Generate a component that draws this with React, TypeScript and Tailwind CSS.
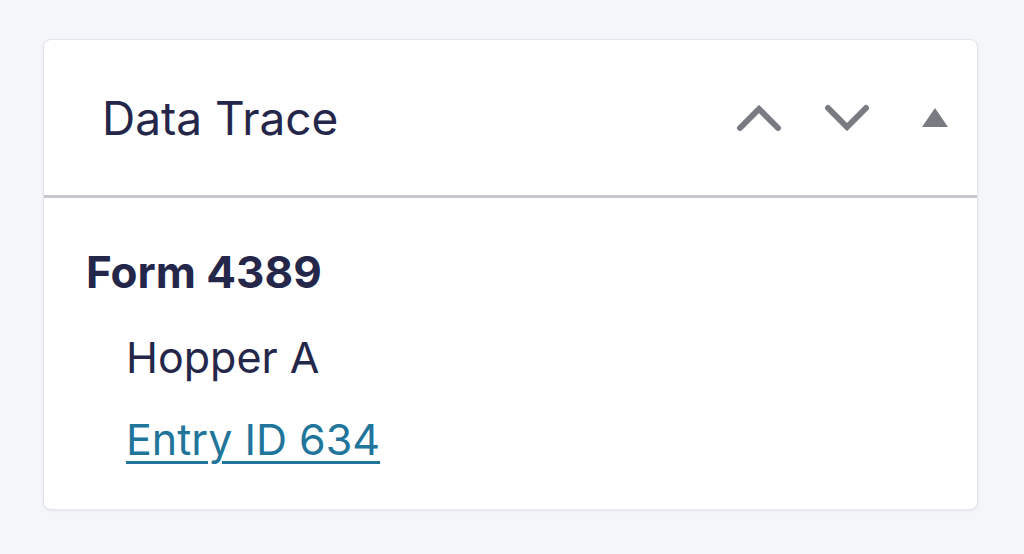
import React from "react";

export default function App() {
  return (
    <div className="w-[1024px] h-[554px] bg-[#f5f6fa] pt-[39px] pl-[43px] [font-family:Inter,'Noto_Sans',sans-serif]">
      <div className="w-[935px] h-[471px] bg-white rounded-[8px] border border-[#e3e4ec] shadow-[0_1px_3px_rgba(30,35,80,0.08)] flex flex-col">
        <div className="h-[158px] flex items-center justify-between pl-[58px] pr-[28px] border-b-[3px] border-[#c6c7cb]">
          <h2 className="text-[46px] leading-none text-[#24274a] font-normal">Data Trace</h2>
          <div className="flex items-center gap-[40px] text-[#787c82]">
            <svg width="48" height="28" viewBox="0 0 48 28" fill="none" stroke="currentColor" strokeWidth="6" strokeLinecap="round" strokeLinejoin="miter">
              <path d="M5 24 L24 5 L43 24" />
            </svg>
            <svg width="48" height="28" viewBox="0 0 48 28" fill="none" stroke="currentColor" strokeWidth="6" strokeLinecap="round" strokeLinejoin="miter">
              <path d="M5 4 L24 23 L43 4" />
            </svg>
            <svg width="28" height="22" viewBox="0 0 28 22" fill="currentColor" className="ml-[10px]">
              <path d="M14 1 L27 20 L1 20 Z" />
            </svg>
          </div>
        </div>
        <div className="pl-[42px] pt-[52px] flex flex-col">
          <div className="text-[44px] leading-none font-bold text-[#24274a]">Form 4389</div>
          <div className="pl-[40px] mt-[42px] text-[43px] leading-none text-[#24274a]">Hopper A</div>
          <a href="#" className="ml-[40px] mt-[39px] text-[43px] leading-none text-[#21759b] underline decoration-[3px] underline-offset-[6px] self-start">Entry ID 634</a>
        </div>
      </div>
    </div>
  );
}
